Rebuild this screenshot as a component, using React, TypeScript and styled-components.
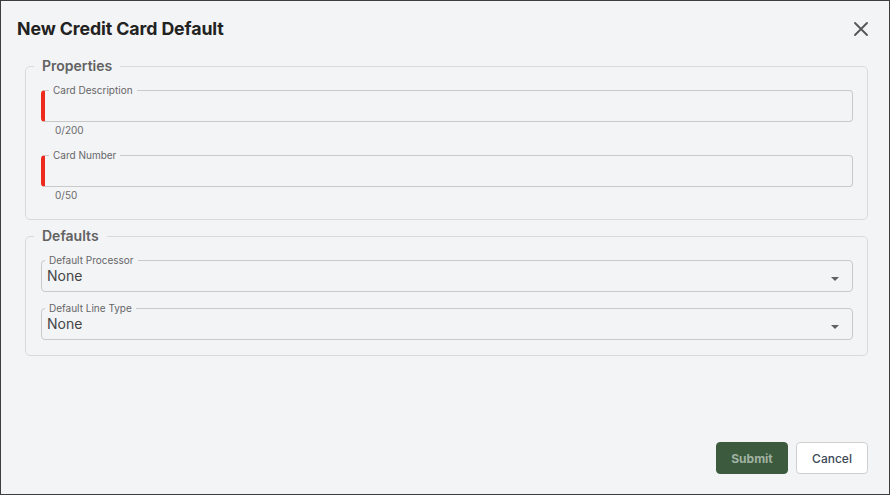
import React from "react";
import styled, { createGlobalStyle } from "styled-components";

const Global = createGlobalStyle`
  html, body { margin: 0; padding: 0; background: #f3f4f6; }
  * { box-sizing: border-box; }
  body { font-family: Inter, "Noto Sans", Arial, sans-serif; }
`;

const Dialog = styled.div`
  width: 890px;
  height: 495px;
  border: 1px solid #3d3d3d;
  background: #f3f4f6;
  display: flex;
  flex-direction: column;
`;

const Header = styled.div`
  display: flex;
  align-items: center;
  justify-content: space-between;
  padding: 16px 21px 0 16px;
`;

const Title = styled.h1`
  margin: 0;
  font-size: 17.75px;
  line-height: 24px;
  font-weight: 700;
  color: #222;
  letter-spacing: -0.1px;
`;

const CloseButton = styled.button`
  border: none;
  background: none;
  padding: 0;
  width: 14px;
  height: 14px;
  display: flex;
  cursor: pointer;
`;

const Body = styled.div`
  flex: 1;
  display: flex;
  flex-direction: column;
  gap: 8px;
  padding: 17px 21px 0 24px;
`;

const Section = styled.fieldset<{ $padBottom: number }>`
  margin: 0;
  min-width: 0;
  border: 1px solid #dadada;
  border-radius: 5px;
  padding: 10px 14px ${(p) => p.$padBottom}px 15px;
  display: flex;
  flex-direction: column;
`;

const SectionLegend = styled.legend`
  margin-left: -7px;
  padding: 0 8px;
  font-size: 14px;
  line-height: 16px;
  font-weight: 600;
  color: #626262;
`;

const FieldGroup = styled.div<{ $gap: number }>`
  display: flex;
  flex-direction: column;
  gap: ${(p) => p.$gap}px;
`;

const FieldWrap = styled.div`
  display: flex;
  flex-direction: column;
`;

const Outline = styled.fieldset<{ $required?: boolean }>`
  margin: 0;
  min-width: 0;
  border: 1px solid #c9c9c9;
  border-left: ${(p) => (p.$required ? "4px solid #ee2a1c" : "1px solid #c9c9c9")};
  border-radius: 4px;
  padding: 0 13px 0 5px;
  display: flex;
  align-items: center;
  justify-content: space-between;
`;

const FieldLabel = styled.legend<{ $required?: boolean }>`
  margin-left: ${(p) => (p.$required ? "-1px" : "-2px")};
  padding: 0 4px;
  font-size: 10px;
  line-height: 12px;
  color: #666;
`;

const TextInput = styled.input`
  border: none;
  outline: none;
  background: transparent;
  width: 100%;
  height: 25px;
  font: inherit;
  font-size: 13px;
`;

const SelectValue = styled.div`
  font-size: 14px;
  line-height: 16px;
  height: 25px;
  padding-top: 2px;
  color: #454545;
`;

const Helper = styled.div`
  margin-top: 2px;
  padding-left: 14px;
  font-size: 10px;
  line-height: 12px;
  color: #6b6b6b;
`;

const Footer = styled.div`
  display: flex;
  justify-content: flex-end;
  gap: 8px;
  padding: 0 21px 20px 0;
`;

const Button = styled.button<{ $primary?: boolean }>`
  width: 72px;
  height: 32px;
  border-radius: 4px;
  font-family: inherit;
  font-size: 12px;
  cursor: pointer;
  border: 1px solid ${(p) => (p.$primary ? "#3c5b3e" : "#cfcfcf")};
  background: ${(p) => (p.$primary ? "#3c5b3e" : "#ffffff")};
  color: ${(p) => (p.$primary ? "#a2b2a2" : "#3b4858")};
  font-weight: ${(p) => (p.$primary ? 700 : 500)};
`;

const Caret = () => (
  <svg width="8" height="4" viewBox="0 0 8 4">
    <polygon points="0,0 8,0 4,4" fill="#616161" />
  </svg>
);

function TextField({ label, max }: { label: string; max: number }) {
  return (
    <FieldWrap>
      <Outline $required>
        <FieldLabel $required>{label}</FieldLabel>
        <TextInput aria-label={label} />
      </Outline>
      <Helper>0/{max}</Helper>
    </FieldWrap>
  );
}

function SelectField({ label, value }: { label: string; value: string }) {
  return (
    <Outline>
      <FieldLabel>{label}</FieldLabel>
      <SelectValue>{value}</SelectValue>
      <Caret />
    </Outline>
  );
}

export default function App() {
  return (
    <>
      <Global />
      <Dialog>
        <Header>
          <Title>New Credit Card Default</Title>
          <CloseButton aria-label="Close">
            <svg width="14" height="14" viewBox="0 0 14 14">
              <path d="M1 1 L13 13 M13 1 L1 13" stroke="#555" strokeWidth="1.8" strokeLinecap="round" />
            </svg>
          </CloseButton>
        </Header>
        <Body>
          <Section $padBottom={18}>
            <SectionLegend>Properties</SectionLegend>
            <FieldGroup $gap={13}>
              <TextField label="Card Description" max={200} />
              <TextField label="Card Number" max={50} />
            </FieldGroup>
          </Section>
          <Section $padBottom={15}>
            <SectionLegend>Defaults</SectionLegend>
            <FieldGroup $gap={10}>
              <SelectField label="Default Processor" value="None" />
              <SelectField label="Default Line Type" value="None" />
            </FieldGroup>
          </Section>
        </Body>
        <Footer>
          <Button $primary>Submit</Button>
          <Button>Cancel</Button>
        </Footer>
      </Dialog>
    </>
  );
}
